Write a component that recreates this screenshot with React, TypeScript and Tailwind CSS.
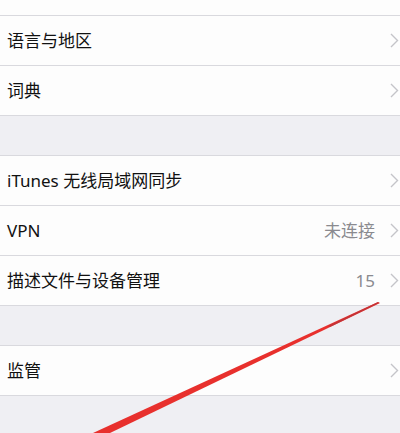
import React from 'react';

type Row = { label: string; value?: string };

const Chevron = () => (
  <svg width="9" height="15" viewBox="0 0 9 15" className="shrink-0">
    <path d="M1 1l6.5 6.5L1 14" fill="none" stroke="#c4c4c9" strokeWidth="1.4" />
  </svg>
);

function Group({ rows }: { rows: Row[] }) {
  return (
    <div className="bg-[#fdfdfd] border-t border-[#d9d9de]">
      {rows.map((r) => (
        <div key={r.label} className="h-[50px] flex items-center pl-[7px] pr-[1px] border-b border-[#d9d9de]">
          <span className="flex-1 text-[17px] text-[#111]">{r.label}</span>
          {r.value && <span className="text-[17px] text-[#8a8a8f] mr-[15px]">{r.value}</span>}
          <Chevron />
        </div>
      ))}
    </div>
  );
}

export default function App() {
  return (
    <div
      className="relative w-[400px] h-[433px] overflow-hidden bg-[#efeff3]"
      style={{ fontFamily: '"Noto Sans", "Noto Sans CJK SC", sans-serif' }}
    >
      <div className="h-[15px] bg-[#fdfdfd]" />
      <Group rows={[{ label: '语言与地区' }, { label: '词典' }]} />
      <div className="h-[39px]" />
      <Group
        rows={[
          { label: 'iTunes 无线局域网同步' },
          { label: 'VPN', value: '未连接' },
          { label: '描述文件与设备管理', value: '15' },
        ]}
      />
      <div className="h-[39px]" />
      <Group rows={[{ label: '监管' }]} />

      {/* red arrow stroke drawn over the screenshot */}
      <svg className="absolute left-0 top-0 pointer-events-none" width="400" height="433" viewBox="0 0 400 433">
        <polygon points="378,302 380,303 110,433 93,433" fill="#e8302d" />
        <polygon points="378,302 379,303 330,327 328,326" fill="#b8353a" opacity="0.8" />
      </svg>
    </div>
  );
}
